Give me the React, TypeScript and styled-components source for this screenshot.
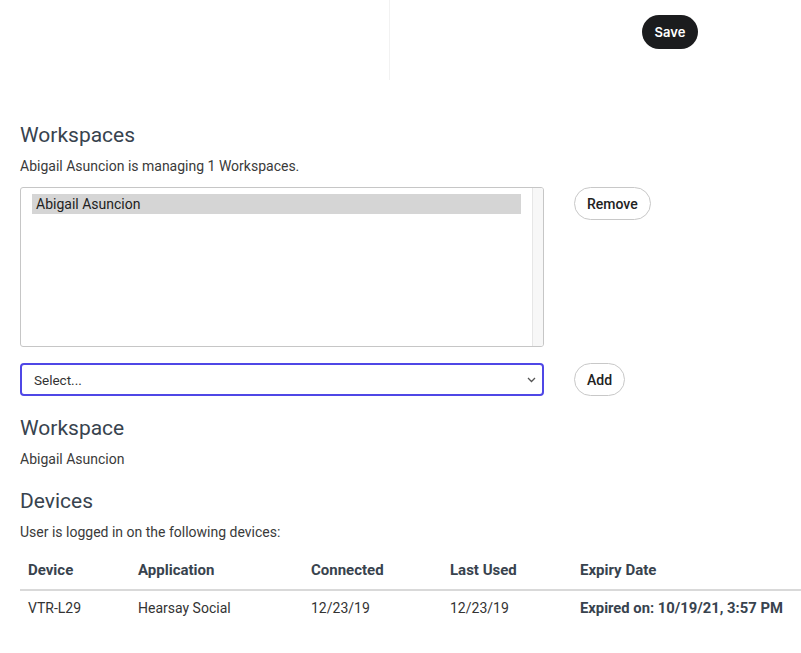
import styled, { createGlobalStyle } from 'styled-components';

const GlobalStyle = createGlobalStyle`
    html, body {
        margin: 0;
        padding: 0;
        background: #ffffff;
        font-family: Roboto, "Liberation Sans", sans-serif;
        color: #333333;
    }
    * { box-sizing: border-box; }
`;

type Device = {
    device : string,
    application : string,
    connected : string,
    lastUsed : string,
    expiry : string
}

const devices : Device[] = [
    { device: 'VTR-L29', application: 'Hearsay Social', connected: '12/23/19', lastUsed: '12/23/19', expiry: 'Expired on: 10/19/21, 3:57 PM' },
];

const ChevronDown = () => (
    <svg width="9" height="6" viewBox="0 0 9 6" fill="none">
        <path d="M1 1l3.5 3.5L8 1" stroke="#555" strokeWidth="1.3" />
    </svg>
);

export default function App() {
    return (
        <Page>
            <GlobalStyle />
            <TopBar>
                <TopLeft />
                <TopRight>
                    <SaveButton>Save</SaveButton>
                </TopRight>
            </TopBar>

            <Main>
                <Heading>Workspaces</Heading>
                <SubText $gap={11}>Abigail Asuncion is managing 1 Workspaces.</SubText>

                <ControlRow $top={13}>
                    <ListBox>
                        <ListItems>
                            <ListItem $selected>Abigail Asuncion</ListItem>
                        </ListItems>
                        <ScrollTrack />
                    </ListBox>
                    <PillButton>Remove</PillButton>
                </ControlRow>

                <ControlRow $top={16}>
                    <SelectBox>
                        <span>Select...</span>
                        <ChevronDown />
                    </SelectBox>
                    <PillButton>Add</PillButton>
                </ControlRow>

                <Heading $top={20}>Workspace</Heading>
                <SubText $gap={11}>Abigail Asuncion</SubText>

                <Heading $top={22}>Devices</Heading>
                <SubText $gap={11}>User is logged in on the following devices:</SubText>

                <DeviceTable>
                    <colgroup>
                        <col style={{ width: 110 }} />
                        <col style={{ width: 173 }} />
                        <col style={{ width: 139 }} />
                        <col style={{ width: 130 }} />
                        <col />
                    </colgroup>
                    <thead>
                        <tr>
                            <HeadCell>Device</HeadCell>
                            <HeadCell>Application</HeadCell>
                            <HeadCell>Connected</HeadCell>
                            <HeadCell>Last Used</HeadCell>
                            <HeadCell>Expiry Date</HeadCell>
                        </tr>
                    </thead>
                    <tbody>
                        {devices.map(d => (
                            <tr key={d.device}>
                                <Cell>{d.device}</Cell>
                                <Cell>{d.application}</Cell>
                                <Cell>{d.connected}</Cell>
                                <Cell>{d.lastUsed}</Cell>
                                <Cell $bold>{d.expiry}</Cell>
                            </tr>
                        ))}
                    </tbody>
                </DeviceTable>
            </Main>
        </Page>
    );
}

const Page = styled.div`
    width: 100%;
    min-height: 100vh;
    overflow: hidden;
`;

const TopBar = styled.div`
    display: flex;
    height: 80px;
`;

const TopLeft = styled.div`
    width: 390px;
    border-right: 1px solid #f2f2f2;
`;

const TopRight = styled.div`
    flex: 1;
    padding: 15px 0 0 252px;
`;

const SaveButton = styled.button`
    display: block;
    height: 34px;
    width: 56px;
    border: none;
    border-radius: 17px;
    background: #1b1c1e;
    color: #ffffff;
    font-family: Inter, Roboto, sans-serif;
    font-size: 13px;
    font-weight: 600;
    padding: 0;
    cursor: pointer;
`;

const Main = styled.div`
    padding: 43px 0 0 20px;
    display: flex;
    flex-direction: column;
`;

const Heading = styled.h2<{ $top? : number }>`
    margin: ${p => p.$top ?? 0}px 0 0 0;
    font-size: 21px;
    line-height: 24px;
    font-weight: 400;
    color: #38434e;
`;

const SubText = styled.p<{ $gap : number }>`
    margin: ${p => p.$gap}px 0 0 0;
    font-size: 14px;
    line-height: 16px;
    color: #3a3a3a;
`;

const ControlRow = styled.div<{ $top : number }>`
    display: flex;
    align-items: flex-start;
    gap: 30px;
    margin-top: ${p => p.$top}px;
`;

const ListBox = styled.div`
    width: 524px;
    height: 160px;
    border: 1px solid #c6c6c6;
    border-radius: 3px;
    display: flex;
    overflow: hidden;
`;

const ListItems = styled.div`
    flex: 1;
    padding: 6px 11px 0 11px;
`;

const ListItem = styled.div<{ $selected? : boolean }>`
    height: 20px;
    padding-left: 4px;
    font-size: 14px;
    line-height: 20px;
    color: #222222;
    background: ${p => (p.$selected ? '#d5d5d5' : 'transparent')};
`;

const ScrollTrack = styled.div`
    width: 11px;
    background: #f7f7f7;
    border-left: 1px solid #e6e6e6;
`;

const PillButton = styled.button`
    height: 33px;
    padding: 0 12px;
    border: 1px solid #c8c8c8;
    border-radius: 17px;
    background: #ffffff;
    color: #222222;
    font-family: Roboto, sans-serif;
    font-size: 14px;
    font-weight: 500;
    cursor: pointer;
`;

const SelectBox = styled.div`
    width: 524px;
    height: 33px;
    border: 2px solid #4f47e6;
    border-radius: 4px;
    display: flex;
    align-items: center;
    justify-content: space-between;
    padding: 0 6px 0 12px;
    font-size: 13.5px;
    color: #333333;
`;

const DeviceTable = styled.table`
    margin-top: 12px;
    width: 100%;
    border-collapse: collapse;
    table-layout: fixed;
`;

const HeadCell = styled.th`
    text-align: left;
    padding: 9px 8px 10px 8px;
    font-size: 15px;
    line-height: 18px;
    font-weight: 700;
    color: #38434e;
    border-bottom: 2px solid #d9d9d9;
`;

const Cell = styled.td<{ $bold? : boolean }>`
    padding: 9px 8px 7px 8px;
    font-size: ${p => (p.$bold ? 14.8 : 14)}px;
    line-height: 17px;
    font-weight: ${p => (p.$bold ? 700 : 400)};
    color: ${p => (p.$bold ? '#38434e' : '#333333')};
    white-space: nowrap;
`;
